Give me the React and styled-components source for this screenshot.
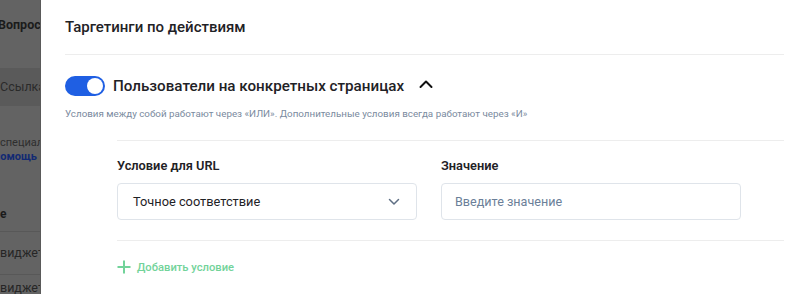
import React from "react";
import styled, { createGlobalStyle } from "styled-components";

const GlobalStyle = createGlobalStyle`
  html, body {
    margin: 0;
    padding: 0;
    background: #ffffff;
    font-family: Roboto, "Noto Sans", Arial, sans-serif;
  }
`;

const colors = {
  text: "#1f2226",
  muted: "#7a8a9e",
  placeholder: "#6b7f99",
  border: "#dfe4ea",
  divider: "#ededed",
  blue: "#1f5fe3",
  green: "#72d39a",
  dim: "#636363",
};

const Screen = styled.div`
  display: flex;
  height: 294px;
  overflow: hidden;
`;

/* dimmed page behind the drawer */
const Backdrop = styled.div`
  width: 41px;
  flex-shrink: 0;
  background: ${colors.dim};
  overflow: hidden;
  border-right: 1px solid #5a5a5a;
  box-sizing: border-box;
`;

const BackdropInner = styled.div`
  width: 120px;
  display: flex;
  flex-direction: column;
`;

const DimRow = styled.div`
  height: ${(props) => props.h}px;
  display: flex;
  align-items: ${(props) => props.align || "center"};
  box-sizing: border-box;
  background: ${(props) => (props.band ? "#5a5a5a" : "transparent")};
  border-bottom: ${(props) => (props.line ? "1px solid #585858" : "none")};
  color: ${(props) => props.color || "#1b1b1b"};
  font-size: ${(props) => props.size || 13}px;
  font-weight: ${(props) => props.weight || 400};
  white-space: nowrap;
  line-height: 14px;
`;

const DimText = styled.span`
  margin-left: ${(props) => props.shift || 0}px;
`;

const DimLink = styled.span`
  color: #122a73;
  font-weight: 700;
`;

const Panel = styled.div`
  flex: 1;
  background: #ffffff;
  padding: 0 21px 0 24px;
  display: flex;
  flex-direction: column;
  color: ${colors.text};
`;

const Header = styled.div`
  height: 55px;
  display: flex;
  align-items: center;
  border-bottom: 1px solid ${colors.divider};
  box-sizing: border-box;
`;

const Title = styled.h2`
  margin: 0;
  font-size: 15px;
  font-weight: 500;
`;

const Section = styled.div`
  padding-top: 21px;
  display: flex;
  flex-direction: column;
`;

const ToggleRow = styled.div`
  display: flex;
  align-items: center;
  height: 20px;
  gap: 8px;
`;

const Switch = styled.div`
  width: 40px;
  height: 20px;
  border-radius: 10px;
  background: ${(props) => (props.on ? colors.blue : "#c7ccd3")};
  display: flex;
  align-items: center;
  justify-content: ${(props) => (props.on ? "flex-end" : "flex-start")};
  padding: 2px;
  box-sizing: border-box;
`;

const Knob = styled.div`
  width: 16px;
  height: 16px;
  border-radius: 50%;
  background: #ffffff;
`;

const SectionName = styled.span`
  font-size: 15.2px;
  font-weight: 500;
`;

const Chevron = styled.svg`
  width: 14px;
  height: 14px;
  margin-left: 7px;
  margin-top: -4px;
`;

const Hint = styled.p`
  margin: 11px 0 0;
  font-size: 9.8px;
  line-height: 14px;
  color: ${colors.muted};
`;

const Conditions = styled.div`
  margin: 19px 0 0 52px;
  border-top: 1px solid ${colors.divider};
  padding-top: 17px;
`;

const FieldsRow = styled.div`
  display: grid;
  grid-template-columns: 300px 300px;
  column-gap: 24px;
  padding-bottom: 20px;
  border-bottom: 1px solid ${colors.divider};
`;

const Field = styled.div`
  display: flex;
  flex-direction: column;
  gap: 9px;
`;

const Label = styled.label`
  font-size: 12.8px;
  line-height: 16px;
  font-weight: 600;
  color: ${colors.text};
`;

const Box = styled.div`
  height: 37px;
  border: 1px solid ${colors.border};
  border-radius: 4px;
  box-sizing: border-box;
  display: flex;
  align-items: center;
  justify-content: space-between;
  padding: 0 16px 0 ${(props) => (props.select ? 15 : 13)}px;
  font-size: ${(props) => (props.select ? 12.8 : 12.6)}px;
  color: ${(props) => (props.placeholder ? colors.placeholder : colors.text)};
`;

const AddButton = styled.button`
  margin-top: 19px;
  display: flex;
  align-items: center;
  gap: 6px;
  padding: 0;
  border: none;
  background: none;
  font-family: inherit;
  font-size: 11.2px;
  font-weight: 500;
  color: ${colors.green};
  cursor: pointer;
`;

const dimRows = [
  { h: 12 },
  { h: 26, text: "Вопросы", weight: 700, shift: -2, size: 12.5 },
  { h: 30 },
  { h: 38, text: "Ссылка", band: true, color: "#2a2a2a", size: 12.5 },
  { h: 30 },
  { h: 14, text: "специалист", color: "#2e2e2e", size: 11 },
  { h: 14, link: true, size: 11, shift: -6 },
  { h: 43 },
  { h: 14, text: "е", weight: 700, size: 12 },
  { h: 11, line: true },
  { h: 43, text: "виджет", line: true, color: "#262626", size: 12.5 },
  { h: 20, text: "виджет", color: "#262626", align: "flex-end", size: 12.5 },
];

export default function App() {
  return (
    <>
      <GlobalStyle />
      <Screen>
        <Backdrop>
          <BackdropInner>
            {dimRows.map((r, i) => (
              <DimRow
                key={i}
                h={r.h}
                band={r.band}
                line={r.line}
                color={r.color}
                size={r.size}
                weight={r.weight}
                align={r.align}
              >
                <DimText shift={r.shift}>
                  {r.link ? (
                    <span style={{ color: "#2e2e2e" }}>
                      <DimLink>помощь</DimLink> мо
                    </span>
                  ) : (
                    r.text
                  )}
                </DimText>
              </DimRow>
            ))}
          </BackdropInner>
        </Backdrop>

        <Panel>
          <Header>
            <Title>Таргетинги по действиям</Title>
          </Header>

          <Section>
            <ToggleRow>
              <Switch on>
                <Knob />
              </Switch>
              <SectionName>Пользователи на конкретных страницах</SectionName>
              <Chevron viewBox="0 0 14 14" fill="none">
                <path
                  d="M1.5 10 L7 4.5 L12.5 10"
                  stroke="#111"
                  strokeWidth="2"
                  strokeLinecap="round"
                  strokeLinejoin="round"
                />
              </Chevron>
            </ToggleRow>
            <Hint>
              Условия между собой работают через «ИЛИ». Дополнительные условия
              всегда работают через «И»
            </Hint>

            <Conditions>
              <FieldsRow>
                <Field>
                  <Label>Условие для URL</Label>
                  <Box select>
                    Точное соответствие
                    <svg width="12" height="8" viewBox="0 0 12 8" fill="none">
                      <path
                        d="M1.5 1.5 L6 6 L10.5 1.5"
                        stroke="#5f6f84"
                        strokeWidth="1.5"
                        strokeLinecap="round"
                        strokeLinejoin="round"
                      />
                    </svg>
                  </Box>
                </Field>
                <Field>
                  <Label>Значение</Label>
                  <Box placeholder="true">Введите значение</Box>
                </Field>
              </FieldsRow>

              <AddButton>
                <svg width="14" height="14" viewBox="0 0 14 14" fill="none">
                  <path
                    d="M7 0.5 V13.5 M0.5 7 H13.5"
                    stroke={colors.green}
                    strokeWidth="2"
                  />
                </svg>
                Добавить условие
              </AddButton>
            </Conditions>
          </Section>
        </Panel>
      </Screen>
    </>
  );
}
